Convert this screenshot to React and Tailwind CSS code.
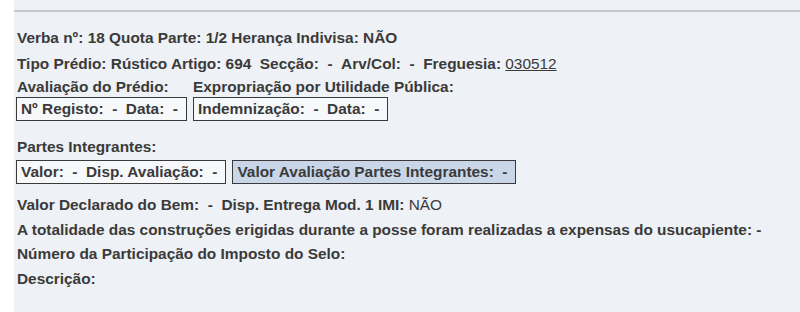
import React from 'react'

function Box({ children, blue }) {
    return (
        <div className={`h-[24px] flex items-center pl-[4px] pr-[8px] whitespace-nowrap border border-[#3a3a3a] ${blue ? 'bg-[#c9d6e8]' : 'bg-[#f7f8fa]'}`}>
            {children}
        </div>
    )
}

export default function App() {
    return (
        <div className="w-[800px] h-[312px] flex bg-white overflow-hidden" style={{ fontFamily: '"Liberation Sans", Arial, sans-serif' }}>
            <div className="w-[14px] shrink-0 bg-white"></div>
            <div className="flex-1 bg-[#eef1f5] text-[15.4px] font-bold text-[#3a3a3a] leading-none whitespace-nowrap">
                <div className="h-[10px]"></div>
                <div className="h-[2px] bg-[#c6c8cc]"></div>

                <div className="pl-[2px] pt-[12px] flex flex-col items-start">
                    <div className="h-[27px] flex items-center pl-[1px]">Verba nº: 18 Quota Parte: 1/2 Herança Indivisa: NÃO</div>
                    <div className="h-[26px] flex items-center pl-[1px]">
                        Tipo Prédio: Rústico Artigo: 694&nbsp; Secção: &nbsp;- &nbsp;Arv/Col: &nbsp;- &nbsp;Freguesia:&nbsp;<span className="underline font-normal">030512</span>
                    </div>

                    <div className="flex gap-[6px]">
                        <div className="flex flex-col items-start">
                            <div className="h-[20px] flex items-center pl-[1px]">Avaliação do Prédio:</div>
                            <Box>Nº Registo: &nbsp;- &nbsp;Data: &nbsp;-</Box>
                        </div>
                        <div className="flex flex-col items-start">
                            <div className="h-[20px] flex items-center">Expropriação por Utilidade Pública:</div>
                            <Box>Indemnização: &nbsp;- &nbsp;Data: &nbsp;-</Box>
                        </div>
                    </div>

                    <div className="h-[20px] flex items-center mt-[16px] pl-[1px]">Partes Integrantes:</div>
                    <div className="flex gap-[6px] items-start mt-[3px]">
                        <Box>Valor: &nbsp;- &nbsp;Disp. Avaliação: &nbsp;-</Box>
                        <Box blue>Valor Avaliação Partes Integrantes: &nbsp;-</Box>
                    </div>

                    <div className="h-[24px] flex items-center mt-[9px] pl-[1px]">
                        Valor Declarado do Bem: &nbsp;- &nbsp;Disp. Entrega Mod. 1 IMI:&nbsp;<span className="font-normal">NÃO</span>
                    </div>
                    <div className="h-[25px] flex items-center pl-[1px]">A totalidade das construções erigidas durante a posse foram realizadas a expensas do usucapiente: -</div>
                    <div className="h-[24px] flex items-center pl-[1px]">Número da Participação do Imposto do Selo:</div>
                    <div className="h-[25px] flex items-center pl-[1px]">Descrição:</div>
                </div>
            </div>
        </div>
    )
}
